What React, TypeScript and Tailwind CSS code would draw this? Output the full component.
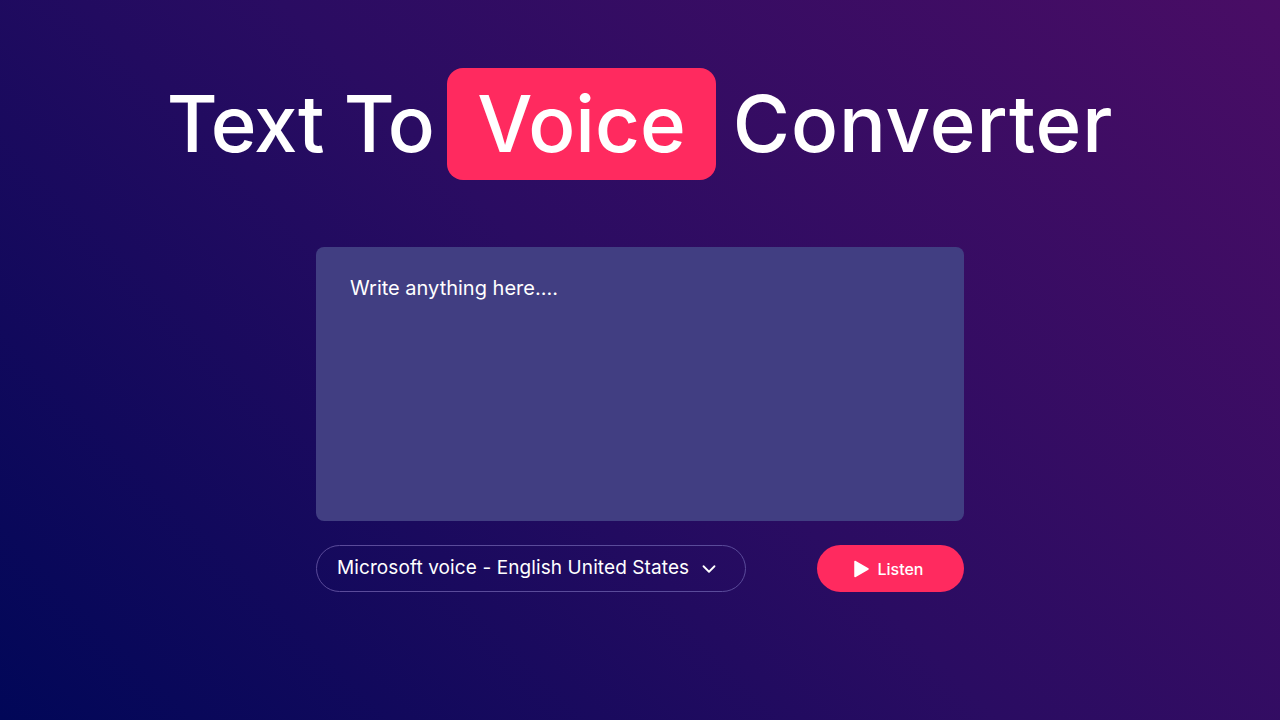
import { ChevronDown } from "lucide-react";

export default function App() {
  return (
    <div
      className="flex h-[720px] w-[1280px] flex-col items-center bg-[linear-gradient(45deg,#010758_0%,#2a0c62_50%,#490d65_100%)] text-white"
      style={{ fontFamily: '"Inter", "Open Sans", sans-serif' }}
    >
      <h1 className="mt-[68px] flex items-center text-[78px] font-medium leading-none">
        <span className="tracking-[-0.8px]">Text To</span>
        <span className="ml-[13px] mr-[17px] flex h-[112px] items-center rounded-2xl bg-[#ff2a5f] px-[30px]">Voice</span>
        <span className="tracking-[0.9px]">Converter</span>
      </h1>

      <div className="mt-[67px] w-[648px]">
        <textarea
          placeholder="Write anything here...."
          className="block h-[274px] w-full resize-none rounded-lg bg-[#413e82] px-[34px] py-[26px] text-[20px] text-white outline-none placeholder:text-white"
        />
        <div className="mt-[24px] flex items-center justify-between">
          <div className="flex h-[47px] w-[430px] items-center justify-between rounded-full border border-[#5a4b9a] pl-[20px] pr-[25px]">
            <span className="text-[19px] tracking-[0.1px]">Microsoft voice - English United States</span>
            <ChevronDown className="h-[22px] w-[22px]" strokeWidth={2} />
          </div>
          <button
            type="button"
            className="flex h-[47px] w-[147px] items-center justify-center gap-2 rounded-full bg-[#ff2a5f] text-[16px] font-medium"
          >
            <svg width="16" height="18" viewBox="0 0 16 18" className="-ml-1">
              <path d="M2 1.5 L15 9 L2 16.5 Z" fill="white" stroke="white" strokeWidth="1.5" strokeLinejoin="round" />
            </svg>
            Listen
          </button>
        </div>
      </div>
    </div>
  );
}
